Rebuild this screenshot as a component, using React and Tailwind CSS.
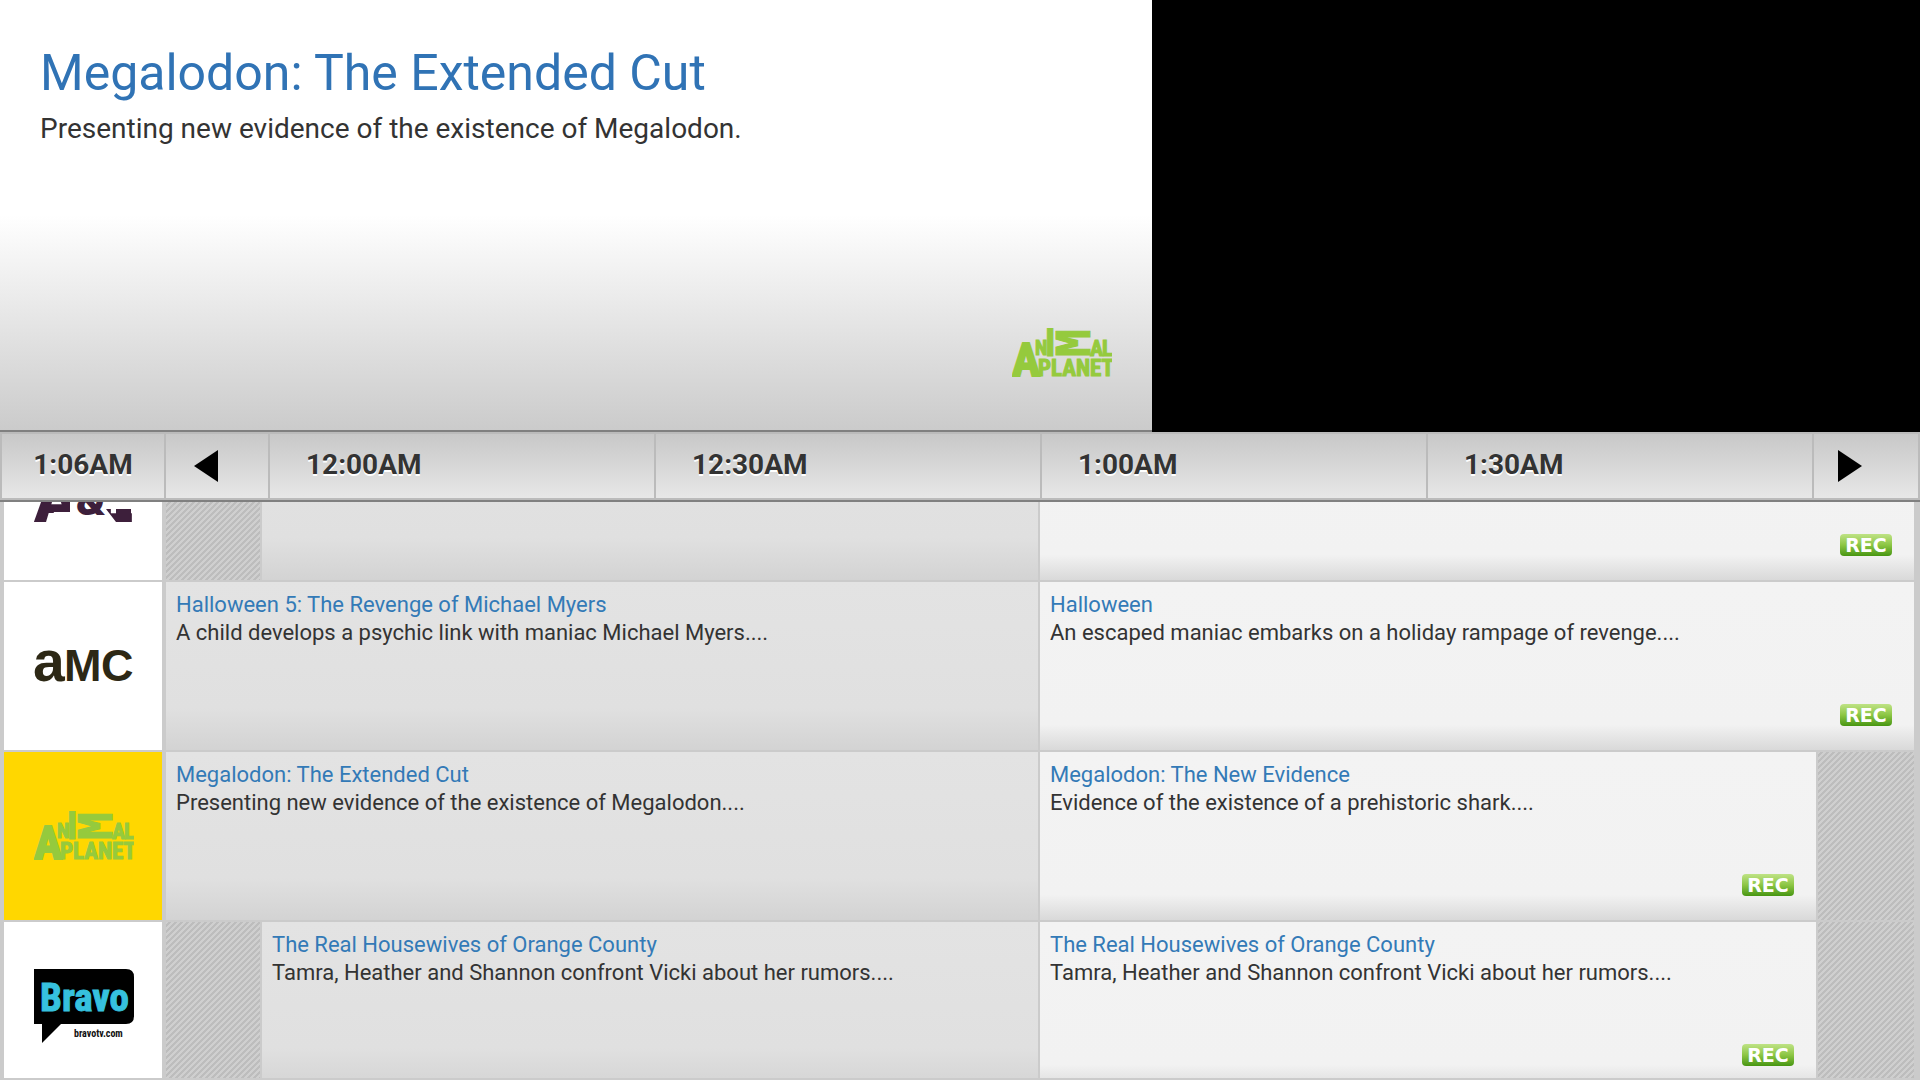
import React from "react";

const mono = "'DejaVu Sans Mono', monospace";
const condensed = "'Roboto Condensed', 'Open Sans Condensed', Roboto, sans-serif";

function AnimalPlanetLogo() {
  return (
    <svg width="100" height="50" viewBox="0 0 100 50" role="img" aria-label="Animal Planet" fill="#95ca3d" stroke="#95ca3d" fontFamily={condensed} fontWeight="700">
      <text x="0" y="48" fontSize="47" strokeWidth="2">A</text>
      <text x="23" y="27" fontSize="20" strokeWidth="1">N</text>
      <text x="33" y="28" fontSize="38" strokeWidth="1">I</text>
      <text transform="translate(78 29) rotate(-90)" fontSize="46" strokeWidth="1" fontFamily={mono}>M</text>
      <text x="78" y="28" fontSize="22" strokeWidth="1">A</text>
      <text x="90" y="28" fontSize="22" strokeWidth="1">L</text>
      <text x="26" y="48" fontSize="23" strokeWidth="1">PLANET</text>
    </svg>
  );
}

function AmcLogo() {
  return (
    <svg width="100" height="50" viewBox="0 0 100 50" role="img" aria-label="AMC" fill="#2d2815" fontFamily="'Liberation Sans', sans-serif" fontWeight="700">
      <text x="-1" y="40" fontSize="57">a</text>
      <text x="30" y="40" fontSize="45">M</text>
      <text x="67" y="40" fontSize="45">C</text>
    </svg>
  );
}

function AeLogo() {
  return (
    <svg width="100" height="52" viewBox="0 0 100 52" role="img" aria-label="A&amp;E" fill="#3d1f3b" fontFamily="Roboto, sans-serif" fontWeight="900">
      <text x="0" y="52" fontSize="66">A</text>
      <text x="62" y="52" fontSize="66">E</text>
      <path d="M20 42H36V28H50V52H16Z" fill="#fff" />
      <path d="M60 28H100V39H72L82 52H60Z" fill="#fff" />
      <path d="M82 39H97V52H82Z" />
      <text x="42" y="45" fontSize="44">&amp;</text>
    </svg>
  );
}

function BravoLogo() {
  return (
    <svg width="100" height="76" viewBox="0 0 100 76" role="img" aria-label="Bravo" fontWeight="700">
      <path d="M0 1H92Q100 1 100 9V48Q100 56 92 56H27L8 75V56H0Z" fill="#000" />
      <text x="6" y="43" fontSize="39" fill="#36c1de" stroke="#36c1de" strokeWidth="1" fontFamily={condensed}>Bravo</text>
      <text x="40" y="69" fontSize="10" fill="#111" fontFamily={condensed}>bravotv.com</text>
    </svg>
  );
}

const times = ["12:00AM", "12:30AM", "1:00AM", "1:30AM"];

const channels = [
  {
    id: "ae",
    logo: <AeLogo />,
    columns: "grid-cols-[96fr_778fr_876fr]",
    cells: [{ kind: "empty" }, { kind: "past" }, { kind: "next", rec: true }],
  },
  {
    id: "amc",
    logo: <AmcLogo />,
    columns: "grid-cols-[874fr_876fr]",
    cells: [
      { kind: "past", title: "Halloween 5: The Revenge of Michael Myers", text: "A child develops a psychic link with maniac Michael Myers...." },
      { kind: "next", title: "Halloween", text: "An escaped maniac embarks on a holiday rampage of revenge....", rec: true },
    ],
  },
  {
    id: "animal-planet",
    active: true,
    logo: <AnimalPlanetLogo />,
    columns: "grid-cols-[874fr_778fr_98fr]",
    cells: [
      { kind: "past", title: "Megalodon: The Extended Cut", text: "Presenting new evidence of the existence of Megalodon...." },
      { kind: "next", title: "Megalodon: The New Evidence", text: "Evidence of the existence of a prehistoric shark....", rec: true },
      { kind: "empty" },
    ],
  },
  {
    id: "bravo",
    logo: <BravoLogo />,
    columns: "grid-cols-[96fr_778fr_778fr_98fr]",
    cells: [
      { kind: "empty" },
      { kind: "past", title: "The Real Housewives of Orange County", text: "Tamra, Heather and Shannon confront Vicki about her rumors...." },
      { kind: "next", title: "The Real Housewives of Orange County", text: "Tamra, Heather and Shannon confront Vicki about her rumors....", rec: true },
      { kind: "empty" },
    ],
  },
];

const kinds = {
  empty: "bg-[linear-gradient(135deg,#cfcfcf_25%,#bdbdbd_25%_50%,#cfcfcf_50%_75%,#bdbdbd_75%)] bg-size-[6px_6px]",
  past: "bg-[linear-gradient(to_bottom,#e3e3e3,#e0e0e0_75%,#d3d3d3)]",
  next: "bg-[linear-gradient(to_bottom,#f3f3f3,#f2f2f2_85%,#d9d9d9)]",
};

function Cell({ cell }) {
  return (
    <div className={`flex min-w-0 flex-col border-r-2 border-[#cbcbcb] ${kinds[cell.kind]}`}>
      {cell.kind !== "empty" && (
        <div className="flex min-w-0 flex-1 flex-col px-2.5 pt-[9px] pb-6">
          {cell.title && <h2 className="truncate text-[22px] leading-7 text-[#337ab7]">{cell.title}</h2>}
          {cell.text && <p className="truncate text-[22px] leading-7">{cell.text}</p>}
          {cell.rec && (
            <span className="mt-auto mr-3 flex h-[22px] w-[52px] items-center justify-center self-end rounded bg-linear-to-b from-[#bfe384] via-[#8cc643] to-[#479610] font-['DejaVu_Sans',sans-serif] text-[19px] font-bold text-white">
              REC
            </span>
          )}
        </div>
      )}
    </div>
  );
}

const slot = "flex items-center border-r-2 border-[#bbb]";

export default function App() {
  return (
    <main className="flex h-screen flex-col overflow-hidden bg-[#cbcbcb] font-[Roboto,sans-serif] text-[#333]">
      <header className="flex h-2/5 shrink-0">
        <section className="flex w-3/5 flex-col border-b-2 border-[#808080] bg-[linear-gradient(to_bottom,#fff_50%,#cbcbcb)] px-10 pt-[41px] pb-[52px]">
          <h1 className="text-[50px] leading-16 text-[#3073b5]">Megalodon: The Extended Cut</h1>
          <p className="mt-1 text-[28px] leading-10">Presenting new evidence of the existence of Megalodon.</p>
          <div className="mt-auto self-end">
            <AnimalPlanetLogo />
          </div>
        </section>
        <div className="flex-1 bg-black" />
      </header>

      <div className="shrink-0 border-b-2 border-[#808080]">
        <nav aria-label="Time" className="flex h-[68px] border-2 border-[#bbb] bg-linear-to-b from-[#c8c8c8] to-[#e7e7e7] text-[28px] font-bold [text-shadow:0_2px_0_#fff]">
          <time className={`${slot} w-[164px] justify-center pb-0.5`}>1:06AM</time>
          <button aria-label="Earlier" className={`${slot} w-[104px] pl-7`}>
            <svg width="24" height="32" viewBox="0 0 24 32"><path d="M0 16L24 0V32Z" /></svg>
          </button>
          {times.map((t) => (
            <time key={t} className={`${slot} flex-1 pb-0.5 pl-9`}>{t}</time>
          ))}
          <button aria-label="Later" className="flex w-[104px] items-center pl-6">
            <svg width="24" height="32" viewBox="0 0 24 32"><path d="M24 16L0 0V32Z" /></svg>
          </button>
        </nav>
      </div>

      <div className="mb-0.5 min-h-0 flex-1 overflow-hidden px-1">
        <div className="-mt-[90px] flex flex-col gap-0.5">
          {channels.map((c) => (
            <article key={c.id} className="flex h-[168px] gap-1">
              <div className={`flex w-[158px] items-center justify-center pl-0.5 ${c.active ? "bg-[#ffd700]" : "bg-white"}`}>{c.logo}</div>
              <div className={`grid min-w-0 flex-1 ${c.columns}`}>
                {c.cells.map((cell, i) => (
                  <Cell key={i} cell={cell} />
                ))}
              </div>
            </article>
          ))}
        </div>
      </div>
    </main>
  );
}
